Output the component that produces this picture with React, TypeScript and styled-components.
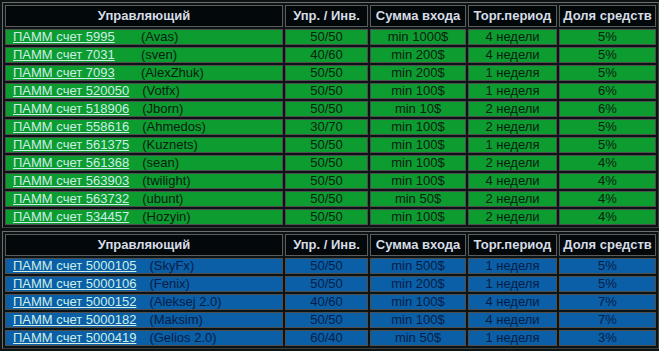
import React from 'react'
import styled, { createGlobalStyle } from 'styled-components'

const GlobalStyle = createGlobalStyle`
  body {
    margin: 0;
    background: #0b1314;
    font-family: "Liberation Sans", Arial, sans-serif;
  }
`

const Page = styled.div`
  padding: 2px 0 0 2px;
  display: flex;
  flex-direction: column;
  gap: 3px;
`

const Table = styled.table`
  width: 657px;
  table-layout: fixed;
  border-collapse: separate;
  border-spacing: 2px;
  border: 1px solid #6e6e6e;
  border-right-color: #3c3c3c;
  border-bottom-color: #3c3c3c;
  font-size: 13px;
`

const Head = styled.th<{ $w: number }>`
  width: ${p => p.$w}px;
  height: 20px;
  padding: 0;
  background: #03080a;
  color: #d6dce6;
  font-weight: bold;
  line-height: 20px;
  text-align: center;
  white-space: nowrap;
  border: 1px solid #5c5c5c;
`

const Cell = styled.td<{ $tone: 'green' | 'blue' }>`
  height: 14px;
  padding: 0;
  line-height: 14px;
  text-align: center;
  white-space: nowrap;
  background: ${p => (p.$tone === 'green' ? '#0c9c30' : '#0a5fa6')};
  color: ${p => (p.$tone === 'green' ? '#0a2010' : '#061d46')};
  border: 1px solid #4e4e4e;
`

const NameCell = styled(Cell)`
  text-align: left;
  padding-left: 7px;
`

const Link = styled.a`
  display: inline-block;
  min-width: 115px;
  margin-right: 13px;
  color: #cdeee6;
  text-decoration: underline;
`

type Row = [string, string, string, string, string, string]

const green: Row[] = [
  ['5995', 'Avas', '50/50', 'min 1000$', '4 недели', '5%'],
  ['7031', 'sven', '40/60', 'min 200$', '4 недели', '5%'],
  ['7093', 'AlexZhuk', '50/50', 'min 200$', '1 неделя', '5%'],
  ['520050', 'Votfx', '50/50', 'min 100$', '1 неделя', '6%'],
  ['518906', 'Jborn', '50/50', 'min 10$', '2 недели', '6%'],
  ['558616', 'Ahmedos', '30/70', 'min 100$', '2 недели', '5%'],
  ['561375', 'Kuznets', '50/50', 'min 100$', '1 неделя', '5%'],
  ['561368', 'sean', '50/50', 'min 100$', '2 недели', '4%'],
  ['563903', 'twilight', '50/50', 'min 100$', '4 недели', '4%'],
  ['563732', 'ubunt', '50/50', 'min 50$', '2 недели', '4%'],
  ['534457', 'Hozyin', '50/50', 'min 100$', '2 недели', '4%'],
]

const blue: Row[] = [
  ['5000105', 'SkyFx', '50/50', 'min 500$', '1 неделя', '5%'],
  ['5000106', 'Fenix', '50/50', 'min 200$', '1 неделя', '5%'],
  ['5000152', 'Aleksej 2.0', '40/60', 'min 100$', '4 недели', '7%'],
  ['5000182', 'Maksim', '50/50', 'min 100$', '4 недели', '7%'],
  ['5000419', 'Gelios 2.0', '60/40', 'min 50$', '1 неделя', '3%'],
]

const PammTable = ({ rows, tone }: { rows: Row[]; tone: 'green' | 'blue' }) => (
  <Table>
    <thead>
      <tr>
        <Head $w={276}>Управляющий</Head>
        <Head $w={81}>Упр. / Инв.</Head>
        <Head $w={94}>Сумма входа</Head>
        <Head $w={87}>Торг.период</Head>
        <Head $w={95}>Доля средств</Head>
      </tr>
    </thead>
    <tbody>
      {rows.map(([num, name, split, min, period, share]) => (
        <tr key={num}>
          <NameCell $tone={tone}>
            <Link href="#">ПАММ счет {num}</Link>({name})
          </NameCell>
          <Cell $tone={tone}>{split}</Cell>
          <Cell $tone={tone}>{min}</Cell>
          <Cell $tone={tone}>{period}</Cell>
          <Cell $tone={tone}>{share}</Cell>
        </tr>
      ))}
    </tbody>
  </Table>
)

const App = () => (
  <>
    <GlobalStyle />
    <Page>
      <PammTable rows={green} tone="green" />
      <PammTable rows={blue} tone="blue" />
    </Page>
  </>
)

export default App
